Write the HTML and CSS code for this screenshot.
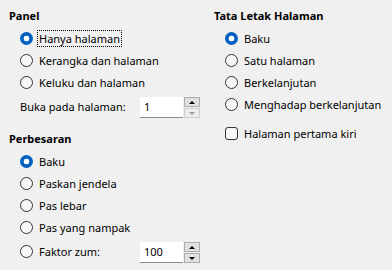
FILE: index.html
```html
<!DOCTYPE html>
<html>
<head>
<meta charset="utf-8">
<link rel="stylesheet" href="styles.css">
</head>
<body>
<div class="page">
  <div class="col col-left">
    <div class="group">
      <div class="head">Panel</div>
      <div class="row"><span class="radio on"></span><span class="label focus">Hanya halaman</span></div>
      <div class="row"><span class="radio"></span><span class="label">Kerangka dan halaman</span></div>
      <div class="row"><span class="radio"></span><span class="label">Keluku dan halaman</span></div>
      <div class="row field">
        <span class="flabel">Buka pada halaman:</span>
        <div class="spin">
          <div class="input">1</div>
          <div class="btns">
            <div class="btn up"><span class="tri up"></span></div>
            <div class="btn down dis"><span class="tri down"></span></div>
          </div>
        </div>
      </div>
    </div>
    <div class="group g2">
      <div class="head">Perbesaran</div>
      <div class="row"><span class="radio on"></span><span class="label">Baku</span></div>
      <div class="row"><span class="radio"></span><span class="label">Paskan jendela</span></div>
      <div class="row"><span class="radio"></span><span class="label">Pas lebar</span></div>
      <div class="row"><span class="radio"></span><span class="label">Pas yang nampak</span></div>
      <div class="row field">
        <span class="radio"></span><span class="label flabel2">Faktor zum:</span>
        <div class="spin">
          <div class="input">100</div>
          <div class="btns">
            <div class="btn up"><span class="tri up"></span></div>
            <div class="btn down"><span class="tri down"></span></div>
          </div>
        </div>
      </div>
    </div>
  </div>
  <div class="col col-right">
    <div class="group">
      <div class="head">Tata Letak Halaman</div>
      <div class="row"><span class="radio on"></span><span class="label">Baku</span></div>
      <div class="row"><span class="radio"></span><span class="label">Satu halaman</span></div>
      <div class="row"><span class="radio"></span><span class="label">Berkelanjutan</span></div>
      <div class="row"><span class="radio"></span><span class="label">Menghadap berkelanjutan</span></div>
      <div class="row check-row"><span class="check"></span><span class="label">Halaman pertama kiri</span></div>
    </div>
  </div>
</div>
</body>
</html>
```

FILE: styles.css
```css
html, body {
  margin: 0;
  padding: 0;
  background: #f0f0f0;
}
body {
  width: 392px;
  height: 270px;
  overflow: hidden;
  font-family: "Noto Sans", "Open Sans", sans-serif;
  font-size: 11px;
  color: #000;
}
.page {
  display: flex;
  padding: 5px 0 0 9px;
}
.col-left {
  width: 205px;
}
.col-right {
  width: 170px;
}
.group {
  display: flex;
  flex-direction: column;
}
.g2 {
  margin-top: 9px;
}
.head {
  height: 22px;
  line-height: 22px;
  font-weight: bold;
}
.row {
  height: 22px;
  display: flex;
  align-items: center;
  padding-left: 11px;
}
.row.field {
  height: 26px;
}
.check-row {
  margin-top: 7px;
}
.radio {
  width: 11px;
  height: 11px;
  border: 1px solid #333;
  border-radius: 50%;
  background: #f7f7f7;
  box-sizing: content-box;
  flex: none;
}
.radio.on {
  width: 13px;
  height: 13px;
  border: none;
  background: radial-gradient(circle, #fff 0, #fff 2.6px, #0060c0 3.2px);
}
.check {
  width: 11px;
  height: 11px;
  border: 1px solid #333;
  border-radius: 3px;
  background: #f7f7f7;
  flex: none;
}
.label {
  margin-left: 4px;
  line-height: 15px;
  padding: 0 1px;
  border: 1px solid transparent;
  white-space: nowrap;
}
.label.focus {
  border: 1px dotted #000;
}
.flabel {
  width: 120px;
  white-space: nowrap;
}
.flabel2 {
  width: 94px;
  margin-right: 5px;
}
.spin {
  display: flex;
  height: 21px;
  margin-top: 3px;
}
.input {
  width: 39px;
  height: 20px;
  background: #fff;
  border-bottom: 1px solid #8a8a8a;
  line-height: 20px;
  padding-left: 4px;
}
.btns {
  margin-left: 1px;
  display: flex;
  flex-direction: column;
  gap: 1px;
}
.btn {
  width: 14px;
  height: 8px;
  border: 1px solid #adadad;
  background: #e1e1e1;
  display: flex;
  align-items: center;
  justify-content: center;
}
.btn.dis {
  border-color: #d0d0d0;
  background: #ececec;
}
.tri {
  width: 0;
  height: 0;
  border-left: 3px solid transparent;
  border-right: 3px solid transparent;
}
.tri.up {
  border-bottom: 3px solid #000;
}
.tri.down {
  border-top: 3px solid #000;
}
.dis .tri.down {
  border-top-color: #a0a0a0;
}
```
